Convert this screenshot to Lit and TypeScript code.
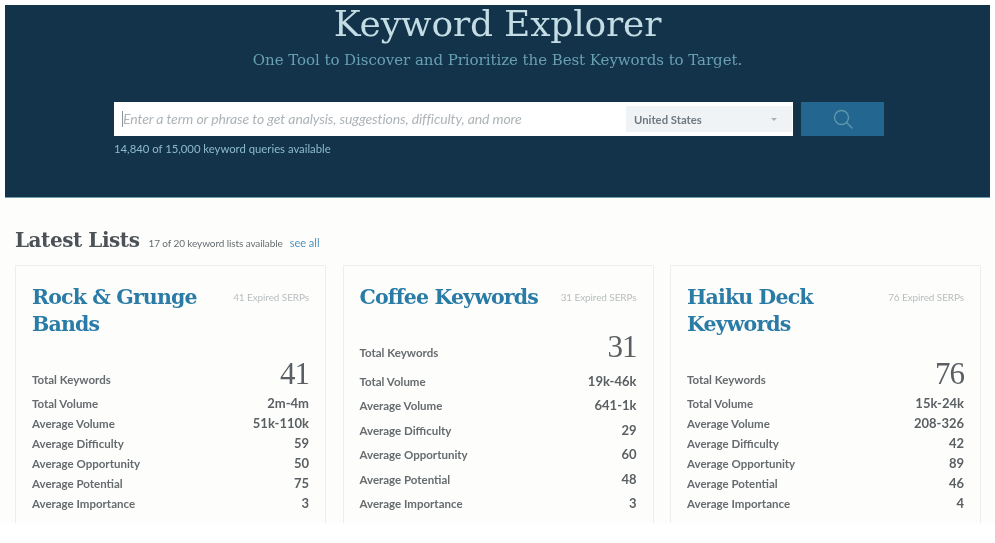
import { LitElement, html, css } from "lit";
import { customElement } from "lit/decorators.js";

interface KeywordList {
  title: string[];
  expired: string;
  total: string;
  rows: [string, string][];
}

const LISTS: KeywordList[] = [
  {
    title: ["Rock & Grunge", "Bands"],
    expired: "41 Expired SERPs",
    total: "41",
    rows: [
      ["Total Volume", "2m-4m"],
      ["Average Volume", "51k-110k"],
      ["Average Difficulty", "59"],
      ["Average Opportunity", "50"],
      ["Average Potential", "75"],
      ["Average Importance", "3"],
    ],
  },
  {
    title: ["Coffee Keywords"],
    expired: "31 Expired SERPs",
    total: "31",
    rows: [
      ["Total Volume", "19k-46k"],
      ["Average Volume", "641-1k"],
      ["Average Difficulty", "29"],
      ["Average Opportunity", "60"],
      ["Average Potential", "48"],
      ["Average Importance", "3"],
    ],
  },
  {
    title: ["Haiku Deck", "Keywords"],
    expired: "76 Expired SERPs",
    total: "76",
    rows: [
      ["Total Volume", "15k-24k"],
      ["Average Volume", "208-326"],
      ["Average Difficulty", "42"],
      ["Average Opportunity", "89"],
      ["Average Potential", "46"],
      ["Average Importance", "4"],
    ],
  },
];

@customElement("app-root")
export class AppRoot extends LitElement {
  static styles = css`
    :host {
      display: block;
      width: 995px;
      height: 543px;
      overflow: hidden;
      background: #fff;
      font-family: "Lato", sans-serif;
      --slab: "DejaVu Serif", "Liberation Serif", serif;
    }
    .frame {
      padding: 5px 5px 0 5px;
      filter: blur(0.4px);
    }
    .hero {
      box-sizing: border-box;
      height: 193px;
      background: #12334a;
      border-bottom: 1px solid #6f9fb3;
      display: flex;
      flex-direction: column;
      align-items: center;
    }
    h1 {
      margin: 0;
      font-family: var(--slab);
      font-weight: 200;
      font-size: 36px;
      line-height: 38px;
      color: #c4dde5;
      letter-spacing: -0.18px;
    }
    .tagline {
      margin: 7px 0 0;
      font-family: var(--slab);
      font-size: 15px;
      line-height: 20px;
      color: #68a0b0;
      letter-spacing: -0.05px;
    }
    .search {
      align-self: flex-start;
      margin: 32px 0 0 109px;
      display: flex;
      gap: 8px;
    }
    .box {
      box-sizing: border-box;
      width: 679px;
      height: 34px;
      background: #fff;
      display: flex;
      align-items: center;
      padding: 0 1px 0 8px;
    }
    .placeholder {
      flex: 1;
      font-size: 14px;
      font-style: italic;
      color: #adb3b7;
      border-left: 1px solid #8b9499;
      line-height: 16px;
      letter-spacing: -0.11px;
      white-space: nowrap;
    }
    .select {
      box-sizing: border-box;
      width: 166px;
      height: 26px;
      background: #eff3f5;
      display: flex;
      align-items: center;
      justify-content: space-between;
      padding: 0 15px 0 8px;
      font-size: 11.3px;
      font-weight: 700;
      color: #6f7880;
    }
    .caret {
      width: 0;
      height: 0;
      border-left: 3px solid transparent;
      border-right: 3px solid transparent;
      border-top: 3px solid #a9b1b6;
    }
    .go {
      width: 83px;
      height: 34px;
      background: #23668f;
      display: flex;
      align-items: center;
      justify-content: center;
    }
    .go svg {
      display: block;
    }
    .quota {
      align-self: flex-start;
      margin: 6px 0 0 109px;
      font-size: 11.3px;
      line-height: 14px;
      color: #8dbccb;
    }
    .lists {
      box-sizing: border-box;
      height: 325px;
      overflow: hidden;
      margin-left: -5px;
      margin-right: -5px;
      background: #fdfefc;
      padding: 28px 14px 0 15px;
    }
    .lists-head {
      display: flex;
      align-items: baseline;
      height: 39px;
    }
    h2 {
      margin: 0;
      font-family: var(--slab);
      font-size: 20px;
      line-height: 28px;
      font-weight: 700;
      color: #4c5257;
      letter-spacing: -0.45px;
    }
    .avail {
      margin-left: 9px;
      font-size: 10px;
      color: #666c70;
      letter-spacing: -0.1px;
    }
    .see {
      margin-left: 7px;
      font-size: 11px;
      color: #4d93c0;
    }
    .grid {
      display: grid;
      grid-template-columns: repeat(3, 311px);
      column-gap: 16.5px;
    }
    .card {
      box-sizing: border-box;
      height: 270px;
      border: 1px solid #eceff0;
      padding: 18px 16px 23px 16px;
      display: flex;
      flex-direction: column;
    }
    .card-head {
      display: flex;
      justify-content: space-between;
      align-items: flex-start;
    }
    h3 {
      margin: 0;
      font-family: var(--slab);
      font-size: 20.5px;
      line-height: 27px;
      font-weight: 700;
      color: #2a7ba6;
      letter-spacing: -0.85px;
      white-space: nowrap;
    }
    .expired {
      margin-top: 7px;
      font-size: 10px;
      line-height: 12px;
      color: #b9bdbf;
      white-space: nowrap;
      letter-spacing: -0.1px;
    }
    .rows {
      flex: 1;
      margin-top: 19px;
      display: flex;
      flex-direction: column;
      justify-content: space-between;
    }
    .row {
      display: flex;
      justify-content: space-between;
      align-items: baseline;
      font-size: 11.5px;
      line-height: 14px;
      color: #666b6f;
      font-weight: 700;
    }
    .val {
      font-size: 13px;
      color: #5a5f63;
    }
    .big {
      font-family: "Liberation Serif", serif;
      font-size: 31px;
      line-height: 34px;
      font-weight: 400;
      color: #5a5f63;
      letter-spacing: -1px;
    }
  `;

  private card(l: KeywordList) {
    return html`
      <article class="card">
        <div class="card-head">
          <h3>${l.title.map((t) => html`${t}<br />`)}</h3>
          <span class="expired">${l.expired}</span>
        </div>
        <div class="rows">
          <div class="row"><span>Total Keywords</span><span class="big">${l.total}</span></div>
          ${l.rows.map(
            ([k, v]) => html`<div class="row"><span>${k}</span><span class="val">${v}</span></div>`
          )}
        </div>
      </article>
    `;
  }

  render() {
    return html`
      <div class="frame">
        <section class="hero">
          <h1>Keyword Explorer</h1>
          <p class="tagline">One Tool to Discover and Prioritize the Best Keywords to Target.</p>
          <div class="search">
            <div class="box">
              <span class="placeholder">Enter a term or phrase to get analysis, suggestions, difficulty, and more</span>
              <div class="select"><span>United States</span><span class="caret"></span></div>
            </div>
            <div class="go">
              <svg width="22" height="22" viewBox="0 0 22 22" fill="none" stroke="#5f97ae" stroke-width="1.4">
                <circle cx="9.5" cy="9.5" r="7" />
                <path d="M14.6 14.6L20 20" stroke-linecap="round" />
              </svg>
            </div>
          </div>
          <div class="quota">14,840 of 15,000 keyword queries available</div>
        </section>
        <section class="lists">
          <div class="lists-head">
            <h2>Latest Lists</h2>
            <span class="avail">17 of 20 keyword lists available</span>
            <span class="see">see all</span>
          </div>
          <div class="grid">${LISTS.map((l) => this.card(l))}</div>
        </section>
      </div>
    `;
  }
}
